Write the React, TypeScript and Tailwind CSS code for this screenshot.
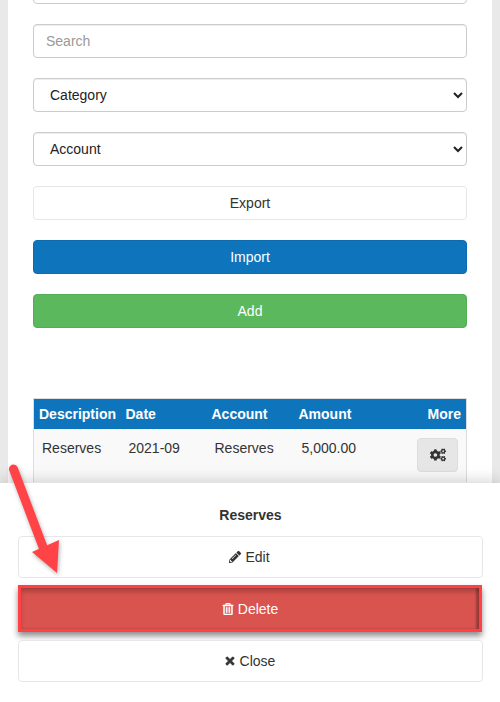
import { FaCogs, FaPencilAlt, FaRegTrashAlt, FaTimes } from "react-icons/fa";

function Sel({ label }: { label: string }) {
  return (
    <select className="block w-full h-[34px] px-3 text-sm text-[#222] bg-white border border-[#ccc] rounded shadow-[inset_0_1px_1px_rgba(0,0,0,0.075)]">
      <option>{label}</option>
    </select>
  );
}

const th = "pl-[5px] text-left font-bold text-white";
const td = "pl-2 pt-[9px] align-top text-[#333]";

export default function App() {
  return (
    <div className="relative h-[702px] w-[500px] overflow-hidden bg-white font-['Liberation_Sans',Arial,sans-serif] text-sm leading-5 text-[#333]">
      <main className="h-[483px] overflow-hidden bg-[#e9e9e9] px-2">
        <div className="flex h-full flex-col bg-white px-[25px]">
          <div className="-mt-[30px] flex flex-col gap-5">
            <input className="block h-[34px] w-full rounded border border-[#ccc] bg-white px-3" />
            <input
              placeholder="Search"
              className="block h-[34px] w-full rounded border border-[#ccc] bg-white px-3 shadow-[inset_0_1px_1px_rgba(0,0,0,0.075)] placeholder:text-[#999]"
            />
            <Sel label="Category" />
            <Sel label="Account" />
            <button className="h-[34px] w-full rounded border border-[#e7e7e7] bg-white text-[#333]">Export</button>
            <button className="h-[34px] w-full rounded border border-[#0d6cb0] bg-[#0e75bc] text-white">Import</button>
            <button className="h-[34px] w-full rounded border border-[#53ad53] bg-[#5cb85c] text-white">Add</button>
          </div>
          <table className="mt-[70px] w-full table-fixed border-x border-t border-[#ddd]">
            <colgroup>
              <col className="w-[87px]" />
              <col className="w-[86px]" />
              <col className="w-[87px]" />
              <col className="w-[86px]" />
              <col />
            </colgroup>
            <thead>
              <tr className="h-[30px] bg-[#0e75bc]">
                <th className={th}>Description</th>
                <th className={th}>Date</th>
                <th className={th}>Account</th>
                <th className={th}>Amount</th>
                <th className="pr-[5px] text-right font-bold text-white">More</th>
              </tr>
            </thead>
            <tbody>
              <tr className="bg-[#f9f9f9]">
                <td className={td}>Reserves</td>
                <td className={td}>2021-09</td>
                <td className={td}>Reserves</td>
                <td className={td}>5,000.00</td>
                <td className="pr-2 pt-[9px] pb-[10px] align-top">
                  <button className="ml-auto flex h-[34px] w-[41px] items-center justify-center rounded border border-[#ddd] bg-[#e6e6e6] text-[#333]">
                    <FaCogs className="h-4 w-4" />
                  </button>
                </td>
              </tr>
            </tbody>
          </table>
        </div>
      </main>

      <section className="relative flex h-[219px] flex-col bg-white pl-[18px] pr-[17px] pt-[23px] shadow-[0_-2px_14px_rgba(0,0,0,0.18)]">
        <h2 className="mb-3 text-center font-bold leading-[18px] text-[#333]">Reserves</h2>
        <button className="flex h-[42px] items-center justify-center gap-1 rounded border border-[#e7e7e7] bg-white pr-[2px] text-[#333]">
          <FaPencilAlt className="h-3 w-3" />
          Edit
        </button>
        <button className="mr-px mt-[7px] flex h-[47px] items-center justify-center gap-1 border-[3px] border-[#ff4044] bg-[#d9534f] text-white shadow-[0_4px_6px_rgba(0,0,0,0.45),inset_0_4px_4px_rgba(0,0,0,0.2),inset_-3px_0_2px_rgba(0,0,0,0.25)]">
          <FaRegTrashAlt className="h-3 w-3" stroke="currentColor" strokeWidth={20} />
          Delete
        </button>
        <button className="mt-2 flex h-[42px] items-center justify-center gap-1 rounded border border-[#e7e7e7] bg-white pr-[2px] text-[#333]">
          <FaTimes className="h-3 w-3" stroke="currentColor" strokeWidth={30} />
          Close
        </button>
      </section>

      <svg className="absolute left-0 top-[460px] h-[120px] w-[70px] drop-shadow-[1px_2px_2px_rgba(0,0,0,0.3)]" viewBox="0 0 70 120">
        <line x1="13.5" y1="9" x2="43" y2="87" stroke="#ff4347" strokeWidth="9" strokeLinecap="round" />
        <polygon points="32,92 59,80 57,113" fill="#ff4347" />
      </svg>
    </div>
  );
}
